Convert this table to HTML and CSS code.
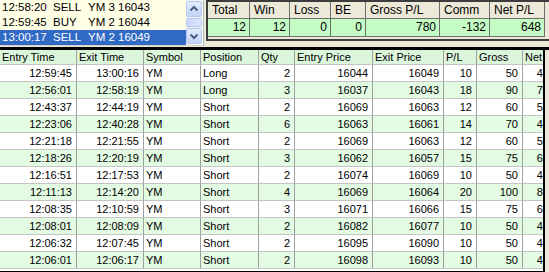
FILE: index.html
```html
<!DOCTYPE html>
<html>
<head>
<meta charset="utf-8">
<link rel="stylesheet" href="styles.css">
</head>
<body>
<div class="top">
  <div class="listbox">
    <div class="items">
      <div class="item"><span class="t">12:58:20</span><span class="a">SELL</span><span>YM 3 16043</span></div>
      <div class="item"><span class="t">12:59:45</span><span class="a">BUY</span><span>YM 2 16044</span></div>
      <div class="item sel"><span class="t">13:00:17</span><span class="a">SELL</span><span>YM 2 16049</span></div>
    </div>
    <div class="scrollbar">
      <div class="sbtn"><svg width="14" height="14" viewBox="0 0 14 14"><polyline points="3.5,8.5 7,5 10.5,8.5" fill="none" stroke="#4d6185" stroke-width="2"/></svg></div>
      <div class="thumb"></div>
      <div class="sbtn"><svg width="14" height="14" viewBox="0 0 14 14"><polyline points="3.5,5.5 7,9 10.5,5.5" fill="none" stroke="#4d6185" stroke-width="2"/></svg></div>
    </div>
  </div>
  <div class="stats">
    <div class="srow shead">
      <div>Total</div><div>Win</div><div>Loss</div><div>BE</div><div>Gross P/L</div><div>Comm</div><div>Net P/L</div>
    </div>
    <div class="srow sdata">
      <div>12</div><div>12</div><div>0</div><div>0</div><div>780</div><div>-132</div><div>648</div>
    </div>
  </div>
</div>
<div class="main">
  <div class="grid">
    <div class="row head">
      <div>Entry Time</div><div>Exit Time</div><div>Symbol</div><div>Position</div><div>Qty</div><div>Entry Price</div><div>Exit Price</div><div>P/L</div><div>Gross</div><div>Net</div>
    </div>
    <div class="row"><div class="r">12:59:45</div><div class="r">13:00:16</div><div>YM</div><div>Long</div><div class="r">2</div><div class="r">16044</div><div class="r">16049</div><div class="r">10</div><div class="r">50</div><div class="r">42</div></div>
    <div class="row alt"><div class="r">12:56:01</div><div class="r">12:58:19</div><div>YM</div><div>Long</div><div class="r">3</div><div class="r">16037</div><div class="r">16043</div><div class="r">18</div><div class="r">90</div><div class="r">78</div></div>
    <div class="row"><div class="r">12:43:37</div><div class="r">12:44:19</div><div>YM</div><div>Short</div><div class="r">2</div><div class="r">16069</div><div class="r">16063</div><div class="r">12</div><div class="r">60</div><div class="r">52</div></div>
    <div class="row alt"><div class="r">12:23:06</div><div class="r">12:40:28</div><div>YM</div><div>Short</div><div class="r">6</div><div class="r">16063</div><div class="r">16061</div><div class="r">14</div><div class="r">70</div><div class="r">46</div></div>
    <div class="row"><div class="r">12:21:18</div><div class="r">12:21:55</div><div>YM</div><div>Short</div><div class="r">2</div><div class="r">16069</div><div class="r">16063</div><div class="r">12</div><div class="r">60</div><div class="r">52</div></div>
    <div class="row alt"><div class="r">12:18:26</div><div class="r">12:20:19</div><div>YM</div><div>Short</div><div class="r">3</div><div class="r">16062</div><div class="r">16057</div><div class="r">15</div><div class="r">75</div><div class="r">63</div></div>
    <div class="row"><div class="r">12:16:51</div><div class="r">12:17:53</div><div>YM</div><div>Short</div><div class="r">2</div><div class="r">16074</div><div class="r">16069</div><div class="r">10</div><div class="r">50</div><div class="r">42</div></div>
    <div class="row alt"><div class="r">12:11:13</div><div class="r">12:14:20</div><div>YM</div><div>Short</div><div class="r">4</div><div class="r">16069</div><div class="r">16064</div><div class="r">20</div><div class="r">100</div><div class="r">84</div></div>
    <div class="row"><div class="r">12:08:35</div><div class="r">12:10:59</div><div>YM</div><div>Short</div><div class="r">3</div><div class="r">16071</div><div class="r">16066</div><div class="r">15</div><div class="r">75</div><div class="r">63</div></div>
    <div class="row alt"><div class="r">12:08:01</div><div class="r">12:08:09</div><div>YM</div><div>Short</div><div class="r">2</div><div class="r">16082</div><div class="r">16077</div><div class="r">10</div><div class="r">50</div><div class="r">42</div></div>
    <div class="row"><div class="r">12:06:32</div><div class="r">12:07:45</div><div>YM</div><div>Short</div><div class="r">2</div><div class="r">16095</div><div class="r">16090</div><div class="r">10</div><div class="r">50</div><div class="r">42</div></div>
    <div class="row alt"><div class="r">12:06:01</div><div class="r">12:06:17</div><div>YM</div><div>Short</div><div class="r">2</div><div class="r">16098</div><div class="r">16093</div><div class="r">10</div><div class="r">50</div><div class="r">42</div></div>
  </div>
</div>
</body>
</html>
```
FILE: styles.css
```css
html, body {
  margin: 0;
  padding: 0;
}
body {
  width: 549px;
  height: 272px;
  overflow: hidden;
  background: #ece9d8;
  font-family: "Liberation Sans", Arial, sans-serif;
  font-size: 11px;
  color: #000;
}
.top {
  display: flex;
  height: 47px;
}
.listbox {
  box-sizing: border-box;
  width: 204px;
  height: 46px;
  display: flex;
  background: #ffffe6;
  border-right: 1px solid #a9b7c9;
  border-bottom: 1px solid #d4d0c8;
}
.items {
  width: 186px;
  font-size: 11.5px;
}
.item {
  display: flex;
  height: 15px;
  line-height: 15px;
  padding-left: 2px;
}
.item span {
  flex-shrink: 0;
  white-space: nowrap;
}
.item .t { width: 51px; }
.item .a { width: 35px; }
.item.sel {
  background: #316ac5;
  color: #fff;
}
.scrollbar {
  width: 16px;
  padding-top: 1px;
  display: flex;
  flex-direction: column;
  gap: 1px;
  background: #f5f4ee;
}
.sbtn {
  box-sizing: border-box;
  height: 16px;
  border: 1px solid #b5c7f0;
  border-radius: 2px;
  background: linear-gradient(#e3ecfe, #c2d4fa);
  display: flex;
  align-items: center;
  justify-content: center;
}
.thumb {
  box-sizing: border-box;
  height: 9px;
  border: 1px solid #b5c7f0;
  border-radius: 2px;
  background: linear-gradient(90deg, #c9d8fb, #dce7fd);
}
.stats {
  box-sizing: border-box;
  margin-left: 2px;
  flex: 1;
  height: 41px;
  border-top: 2px solid #3c3c3c;
  border-left: 2px solid #3c3c3c;
  border-bottom: 2px solid #3c3c3c;
  font-size: 12px;
}
.srow {
  display: grid;
  grid-template-columns: 42px 40px 41px 35px 74px 50px 55px;
}
.srow > div {
  box-sizing: border-box;
  border-right: 1px solid #6e6e6e;
  border-bottom: 1px solid #6e6e6e;
  white-space: nowrap;
  overflow: hidden;
}
.shead > div {
  height: 17px;
  line-height: 16px;
  padding-left: 4px;
  background: #ece9d8;
}
.sdata > div {
  height: 18px;
  line-height: 17px;
  padding-right: 3px;
  text-align: right;
  background: #c4fcc4;
}
.main {
  box-sizing: border-box;
  height: 225px;
  border-top: 3px solid #000;
  display: flex;
}
.grid {
  box-sizing: border-box;
  width: 545px;
  height: 222px;
  overflow: hidden;
  border-right: 2px solid #000;
  border-bottom: 1px solid #000;
  background: #fff;
}
.row {
  display: grid;
  grid-template-columns: 77px 67px 57px 58px 36px 78px 71px 33px 46px 31px;
  width: 554px;
}
.row > div {
  box-sizing: border-box;
  height: 17px;
  line-height: 16px;
  border-right: 1px solid #a0a0a0;
  border-bottom: 1px solid #c4c4c4;
  padding-left: 2px;
  white-space: nowrap;
  overflow: hidden;
}
.row > div.r {
  text-align: right;
  padding-left: 0;
  padding-right: 4px;
}
.row.head > div {
  height: 15px;
  line-height: 14px;
  background: #dcf6dc;
}
.row.alt > div {
  background: #e3fae3;
}
```
